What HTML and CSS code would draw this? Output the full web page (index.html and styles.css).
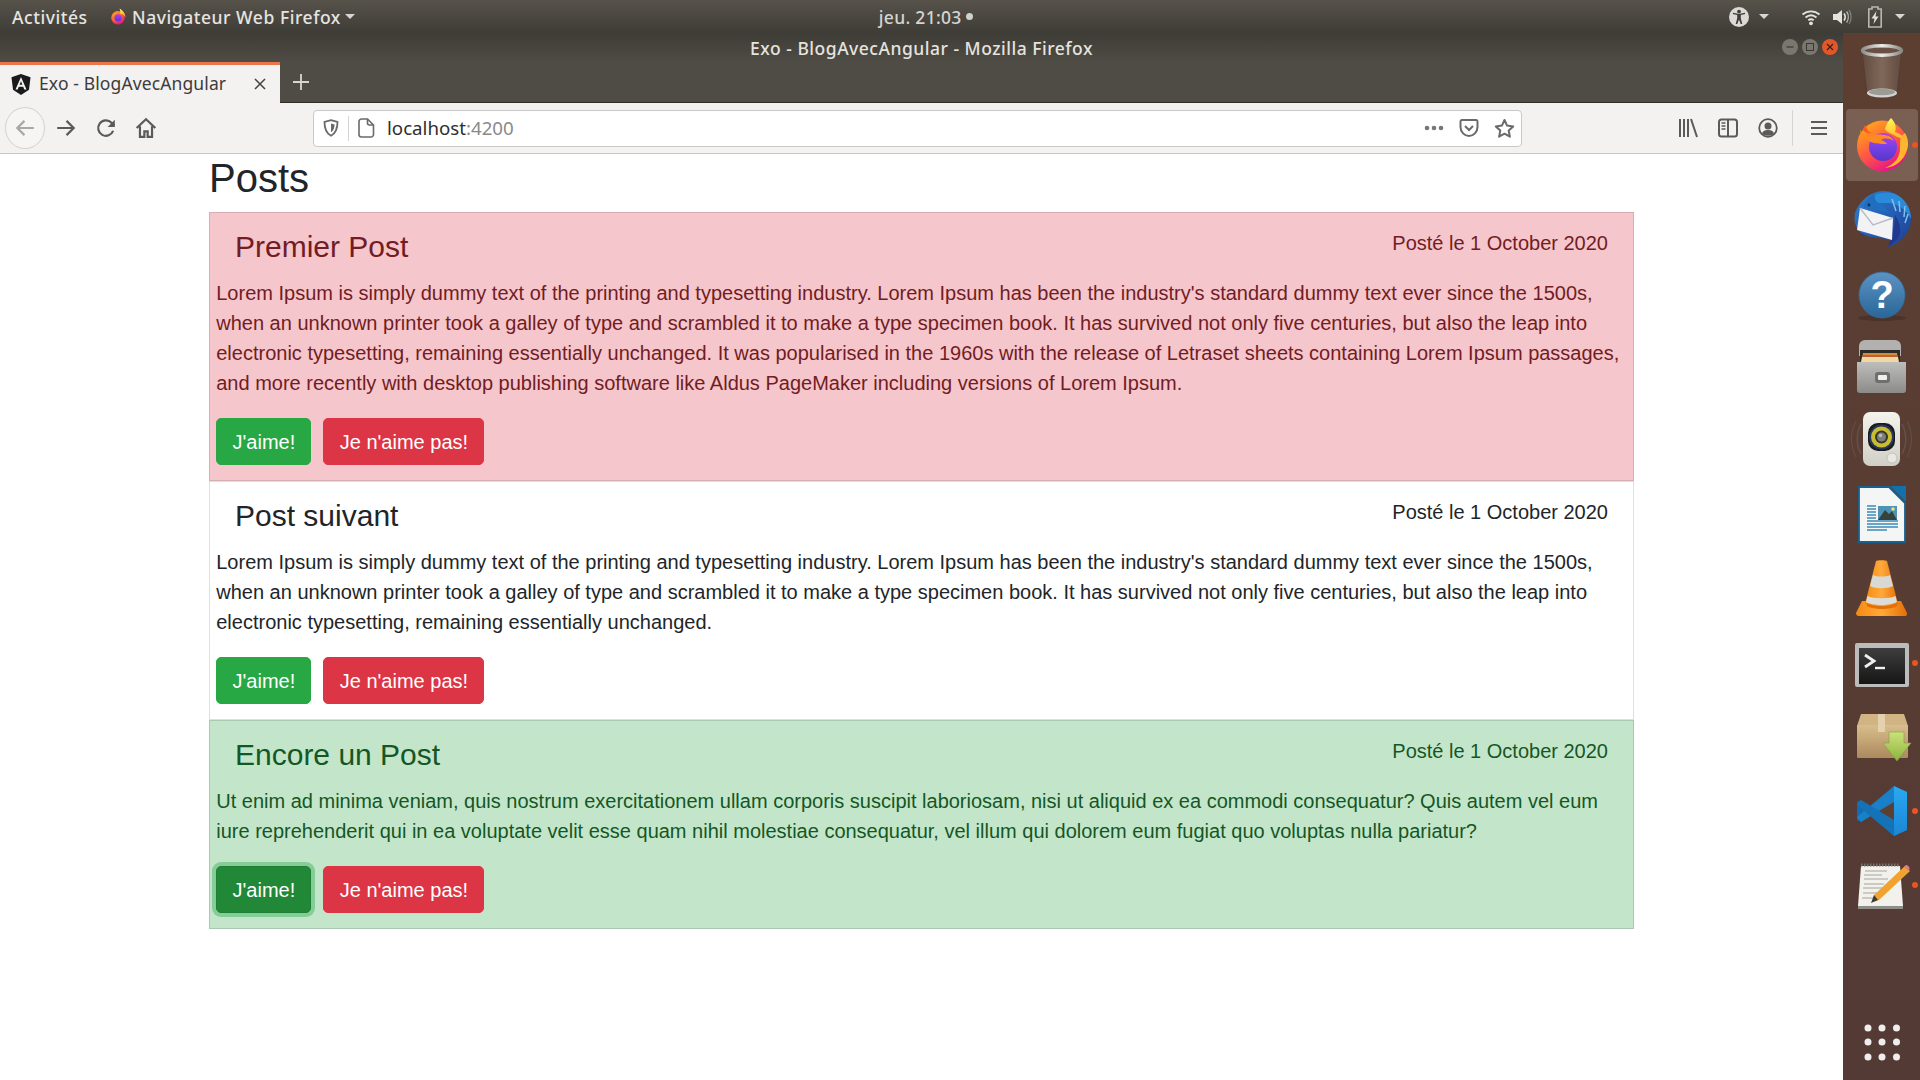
FILE: index.html
```html
<!DOCTYPE html>
<html lang="fr">
<head>
<meta charset="utf-8">
<title>Exo - BlogAvecAngular</title>
<link rel="stylesheet" href="styles.css">
</head>
<body>
<svg class="defs" width="0" height="0" aria-hidden="true">
  <defs>
    <linearGradient id="ffBase" x1="0.1" y1="0.2" x2="0.6" y2="1"><stop offset="0" stop-color="#ff9a1f"/><stop offset="0.55" stop-color="#ff4f4a"/><stop offset="1" stop-color="#e31587"/></linearGradient>
    <linearGradient id="ffTop" x1="0.4" y1="0" x2="0.6" y2="1"><stop offset="0" stop-color="#fff44f"/><stop offset="0.6" stop-color="#ffbd2e"/><stop offset="1" stop-color="#ff8a2a"/></linearGradient>
    <linearGradient id="ffGlobe" x1="0.5" y1="0" x2="0.5" y2="1"><stop offset="0" stop-color="#c139e6"/><stop offset="0.5" stop-color="#7542e5"/><stop offset="1" stop-color="#5a35c9"/></linearGradient>
    <linearGradient id="trashBody" x1="0" y1="0" x2="1" y2="0"><stop offset="0" stop-color="#624a3e"/><stop offset="0.5" stop-color="#806859"/><stop offset="1" stop-color="#604a3e"/></linearGradient>
    <linearGradient id="metal" x1="0" y1="0" x2="1" y2="0"><stop offset="0" stop-color="#8f8f8c"/><stop offset="0.5" stop-color="#ececea"/><stop offset="1" stop-color="#8a8a86"/></linearGradient>
    <linearGradient id="tbBlue" x1="0" y1="0" x2="1" y2="1"><stop offset="0" stop-color="#2f7fd1"/><stop offset="1" stop-color="#1b3f94"/></linearGradient>
    <linearGradient id="helpBlue" x1="0" y1="0" x2="0" y2="1"><stop offset="0" stop-color="#5c93c4"/><stop offset="1" stop-color="#2a6698"/></linearGradient>
    <linearGradient id="cabinet" x1="0" y1="0" x2="0" y2="1"><stop offset="0" stop-color="#bdbdbb"/><stop offset="1" stop-color="#8b8b8a"/></linearGradient>
    <linearGradient id="speakerBox" x1="0" y1="0" x2="0" y2="1"><stop offset="0" stop-color="#f4f3ec"/><stop offset="1" stop-color="#cfcfc8"/></linearGradient>
    <linearGradient id="cone" x1="0" y1="0" x2="1" y2="0"><stop offset="0" stop-color="#f58a0f"/><stop offset="0.5" stop-color="#ffa93a"/><stop offset="1" stop-color="#e56f05"/></linearGradient>
    <linearGradient id="termBg" x1="0" y1="0" x2="0" y2="1"><stop offset="0" stop-color="#3e3e3e"/><stop offset="1" stop-color="#161616"/></linearGradient>
    <linearGradient id="box" x1="0" y1="0" x2="0" y2="1"><stop offset="0" stop-color="#d9bd8c"/><stop offset="1" stop-color="#ab8a5e"/></linearGradient>
    <linearGradient id="arrowGreen" x1="0" y1="0" x2="0" y2="1"><stop offset="0" stop-color="#cbe27a"/><stop offset="1" stop-color="#8db33d"/></linearGradient>
    <linearGradient id="vsLight" x1="0" y1="0" x2="0" y2="1"><stop offset="0" stop-color="#2aa9f0"/><stop offset="1" stop-color="#1a86d6"/></linearGradient>
  </defs>
</svg>

<header class="topbar">
  <div class="top-left">
    <span class="top-activities">Activités</span>
    <svg class="top-ff" width="18" height="18" viewBox="0 0 72 72"><circle cx="36" cy="39" r="27" fill="url(#ffBase)"/><path d="M42 2c14 8 24 20 24 36-5-9-12-14-22-16 2-7 1-13-2-20z" fill="url(#ffTop)"/><circle cx="36" cy="39" r="14" fill="url(#ffGlobe)"/></svg>
    <span class="top-app">Navigateur Web Firefox</span>
    <span class="caret"></span>
  </div>
  <div class="top-clock"><span>jeu. 21:03</span><i class="clock-dot"></i></div>
  <div class="top-right">
    <svg class="ind-a11y" width="20" height="20" viewBox="0 0 20 20"><circle cx="10" cy="10" r="10" fill="#dcdad6"/><circle cx="10" cy="4.600" r="1.900" fill="#3f3d38"/><path d="M3.800 7l4.400 1v3.200L6.700 17h1.600l1.700-4.600 1.700 4.600h1.600l-1.500-5.800V8l4.400-1-.3-1.200-5.900 1.100-5.900-1.100z" fill="#3f3d38"/></svg>
    <span class="caret caret-a11y"></span>
    <svg class="ind-wifi" width="20" height="20" viewBox="0 0 20 20"><g fill="none" stroke="#e4e2de" stroke-width="1.800"><path d="M1.500 7.500c5-4.200 12-4.200 17 0"/><path d="M4.500 10.500c3.400-2.800 7.600-2.800 11 0"/><path d="M7.300 13.200c1.700-1.200 3.700-1.200 5.400 0"/></g><circle cx="10" cy="16.300" r="1.900" fill="#e4e2de"/></svg>
    <svg class="ind-vol" width="20" height="20" viewBox="0 0 20 20"><path d="M1 7h4l5-4v14l-5-4H1z" fill="#e4e2de"/><g fill="none" stroke="#e4e2de"><path d="M12 6.500c1.400 2 1.400 5 0 7" stroke-width="1.600"/><path d="M14.600 4.500c2.200 3.200 2.200 7.800 0 11" stroke-width="1.400" opacity=".7"/><path d="M17 3c2.800 4 2.800 10 0 14" stroke-width="1.200" opacity=".4"/></g></svg>
    <svg class="ind-bat" width="16" height="22" viewBox="0 0 16 22"><path d="M5 1h6v2h3.200v18H1.800V3H5z" fill="none" stroke="#b9b7b2" stroke-width="1.600"/><path d="M9.500 5 4.500 12.500h3L6.500 18l5-7.500h-3z" fill="#e4e2de"/></svg>
    <span class="caret caret-end"></span>
  </div>
</header>

<div class="desk">
  <div class="window">
    <div class="titlebar">
      <span class="win-title">Exo - BlogAvecAngular - Mozilla Firefox</span>
      <div class="win-controls">
        <span class="win-btn"><svg width="16" height="16" viewBox="0 0 16 16"><path d="M4.500 8h7" stroke="#3a3833" stroke-width="1.200"/></svg></span>
        <span class="win-btn"><svg width="16" height="16" viewBox="0 0 16 16"><rect x="4.500" y="4.500" width="7" height="7" fill="none" stroke="#3a3833"/></svg></span>
        <span class="win-btn win-close"><svg width="16" height="16" viewBox="0 0 16 16"><path d="M5 5l6 6M11 5l-6 6" stroke="#3a2018" stroke-width="1.200"/></svg></span>
      </div>
    </div>
    <div class="tabstrip">
      <div class="tab">
        <svg class="tab-fav" width="20" height="21" viewBox="0 0 20 21"><path d="M10 0 19.500 3.300 18 15.800 10 21 2 15.800.5 3.300z" fill="#1a1a1d"/><path d="M10 3 4.500 15.500h2.200l1.100-2.800h4.400l1.100 2.800h2.200zM8.600 10.800 10 7.300l1.400 3.500z" fill="#f3f3f3"/></svg>
        <span class="tab-title">Exo - BlogAvecAngular</span>
        <svg class="tab-close" width="14" height="14" viewBox="0 0 14 14"><path d="M2 2l10 10M12 2 2 12" stroke="#45433f" stroke-width="1.500"/></svg>
      </div>
      <svg class="tab-new" width="18" height="18" viewBox="0 0 18 18"><path d="M9 1v16M1 9h16" stroke="#d8d6d2" stroke-width="1.800"/></svg>
    </div>
    <nav class="toolbar">
      <span class="tb-btn tb-back"><svg width="22" height="22" viewBox="0 0 20 20"><path d="M18 10H3M9.500 3.500 3 10l6.500 6.500" fill="none" stroke="#a8a8a8" stroke-width="2"/></svg></span>
      <span class="tb-btn"><svg width="22" height="22" viewBox="0 0 20 20"><path d="M2 10h15M10.500 3.500 17 10l-6.500 6.500" fill="none" stroke="#5a5a5a" stroke-width="2"/></svg></span>
      <span class="tb-btn"><svg width="22" height="22" viewBox="0 0 20 20"><path d="M16.500 12.500A7 7 0 1 1 15 5.300L17.500 8" fill="none" stroke="#5a5a5a" stroke-width="2"/><path d="M18 2.500V9h-6.500z" fill="#5a5a5a"/></svg></span>
      <span class="tb-btn"><svg width="22" height="22" viewBox="0 0 20 20"><path d="M1.500 10 10 2l8.500 8M4.500 8.500V18h4v-5h3v5h4V8.500" fill="none" stroke="#5a5a5a" stroke-width="2"/></svg></span>
      <div class="urlbar">
        <span class="url-shield"><svg width="16" height="18" viewBox="0 0 16 18"><path d="M8 1.200 14.500 3c0 6-.8 10.800-6.500 13.800C2.300 13.800 1.500 9 1.500 3z" fill="none" stroke="#6a6a6a" stroke-width="1.800"/><path d="M8 4.500 11.500 5.500c0 3-.5 5.800-3.500 7.800z" fill="#6a6a6a"/></svg></span>
        <span class="url-page"><svg width="17" height="20" viewBox="0 0 17 20"><path d="M3.500 1h6l6 6v9.500A2.500 2.500 0 0 1 13 19H3.500A2.500 2.500 0 0 1 1 16.500v-13A2.500 2.500 0 0 1 3.500 1z" fill="none" stroke="#6a6a6a" stroke-width="1.600"/><path d="M9.500 1v4a2 2 0 0 0 2 2h4" fill="none" stroke="#6a6a6a" stroke-width="1.600"/></svg></span>
        <span class="url-text">localhost<em>:4200</em></span>
        <span class="url-actions">
          <svg width="20" height="6" viewBox="0 0 20 6"><circle cx="3" cy="3" r="2.300" fill="#777"/><circle cx="10" cy="3" r="2.300" fill="#777"/><circle cx="17" cy="3" r="2.300" fill="#777"/></svg>
          <svg width="20" height="20" viewBox="0 0 20 20"><path d="M2.800 2h14.400a1.500 1.500 0 0 1 1.300 1.500V9c0 5-4 9-8.500 9S1.500 14 1.500 9V3.500A1.500 1.500 0 0 1 2.800 2z" fill="none" stroke="#6a6a6a" stroke-width="2"/><path d="M6 8l4 4 4-4" fill="none" stroke="#6a6a6a" stroke-width="2"/></svg>
          <svg width="21" height="21" viewBox="0 0 21 21"><path d="M10.500 2l2.600 5.600 6.100.8-4.500 4.200 1.200 6.100-5.400-3-5.400 3 1.200-6.100L1.800 8.400l6.100-.8z" fill="none" stroke="#6a6a6a" stroke-width="2" stroke-linejoin="round"/></svg>
        </span>
      </div>
      <span class="tb-btn tb-lib"><svg width="20" height="20" viewBox="0 0 20 20"><path d="M2 1v18M6 1v18M10 1v18M13 1l6 18" fill="none" stroke="#5a5a5a" stroke-width="2"/></svg></span>
      <span class="tb-btn"><svg width="20" height="20" viewBox="0 0 20 20"><rect x="1" y="1.500" width="18" height="17" rx="2.500" fill="none" stroke="#5a5a5a" stroke-width="2"/><path d="M10 2v16" stroke="#5a5a5a" stroke-width="2"/><path d="M3.500 5h4M3.500 8h4M3.500 11h4" stroke="#5a5a5a" stroke-width="1.500"/></svg></span>
      <span class="tb-btn"><svg width="20" height="20" viewBox="0 0 20 20"><circle cx="10" cy="10" r="8.800" fill="none" stroke="#5a5a5a" stroke-width="1.800"/><circle cx="10" cy="8" r="3.500" fill="#5a5a5a"/><path d="M4 15.500c1-3 3.500-3.500 6-3.500s5 .5 6 3.500c-3.500 3-8.500 3-12 0z" fill="#5a5a5a"/></svg></span>
      <span class="tb-sep"></span>
      <span class="tb-btn tb-menu"><svg width="18" height="18" viewBox="0 0 18 18"><path d="M1 3h16M1 9h16M1 15h16" stroke="#5a5a5a" stroke-width="2"/></svg></span>
    </nav>

    <main class="page">
      <div class="container">
        <h1 class="page-title">Posts</h1>
        <ul class="posts">
          <li class="post post-danger">
            <div class="post-head"><h4 class="post-title">Premier Post</h4><span class="post-date">Posté le 1 October 2020</span></div>
            <p class="post-body">Lorem Ipsum is simply dummy text of the printing and typesetting industry. Lorem Ipsum has been the industry's standard dummy text ever since the 1500s, when an unknown printer took a galley of type and scrambled it to make a type specimen book. It has survived not only five centuries, but also the leap into electronic typesetting, remaining essentially unchanged. It was popularised in the 1960s with the release of Letraset sheets containing Lorem Ipsum passages, and more recently with desktop publishing software like Aldus PageMaker including versions of Lorem Ipsum.</p>
            <div class="post-actions"><button class="btn btn-like">J'aime!</button><button class="btn btn-dislike">Je n'aime pas!</button></div>
          </li>
          <li class="post">
            <div class="post-head"><h4 class="post-title">Post suivant</h4><span class="post-date">Posté le 1 October 2020</span></div>
            <p class="post-body">Lorem Ipsum is simply dummy text of the printing and typesetting industry. Lorem Ipsum has been the industry's standard dummy text ever since the 1500s, when an unknown printer took a galley of type and scrambled it to make a type specimen book. It has survived not only five centuries, but also the leap into electronic typesetting, remaining essentially unchanged.</p>
            <div class="post-actions"><button class="btn btn-like">J'aime!</button><button class="btn btn-dislike">Je n'aime pas!</button></div>
          </li>
          <li class="post post-success">
            <div class="post-head"><h4 class="post-title">Encore un Post</h4><span class="post-date">Posté le 1 October 2020</span></div>
            <p class="post-body">Ut enim ad minima veniam, quis nostrum exercitationem ullam corporis suscipit laboriosam, nisi ut aliquid ex ea commodi consequatur? Quis autem vel eum iure reprehenderit qui in ea voluptate velit esse quam nihil molestiae consequatur, vel illum qui dolorem eum fugiat quo voluptas nulla pariatur?</p>
            <div class="post-actions"><button class="btn btn-like btn-focus">J'aime!</button><button class="btn btn-dislike">Je n'aime pas!</button></div>
          </li>
        </ul>
      </div>
    </main>
  </div>

  <aside class="dock">
    <div class="dock-item">
      <svg width="72" height="72" viewBox="0 0 72 72"><path d="M16 15 21 58c3 5 27 5 30 0l5-43z" fill="url(#trashBody)" stroke="#4d382e" stroke-width=".6"/><ellipse cx="36" cy="58" rx="15" ry="4.500" fill="#d2d2cf"/><ellipse cx="36" cy="57" rx="13" ry="3.200" fill="#9a9a97"/><ellipse cx="36" cy="15.500" rx="19.500" ry="4.800" fill="#6a5044" stroke="url(#metal)" stroke-width="3.400"/></svg>
    </div>
    <div class="dock-item dock-active">
      <svg width="72" height="72" viewBox="0 0 72 72"><circle cx="36.500" cy="37" r="25.500" fill="url(#ffBase)"/><path d="M45 9c4 4 6 9 4 14 7 2 13 8 13 16-2-6-6-10-11-11-5-4-10-4-12-8 1-4 3-8 6-11z" fill="url(#ffTop)"/><path d="M59 24c3 5 4 11 2 17-3 10-11 17-22 18 10-4 15-11 15-20 0-6-1-11 5-15z" fill="#ffb52e"/><circle cx="37" cy="38" r="14" fill="url(#ffGlobe)"/><path d="M14 20c1 4 4 7 8 7 4-1 10-2 15-1 5 0 9 2 11 6-5-3-10-3-13-1 3 1 5 2 6 4-6 0-13 0-18-3-4-3-9-5-9-12z" fill="#ff8a1f"/><path d="M20 16c0 4 2 7 6 8-4 1-8-1-9-3 0-2 1-4 3-5z" fill="#ff5a1f"/></svg>
      <i class="dock-dot"></i>
    </div>
    <div class="dock-item">
      <svg width="72" height="72" viewBox="0 0 72 72"><path d="M9 30C7 40 11 49 20 53L46 57 42 64C56 60 65 48 65 36 65 20 52 8 38 8 26 8 14 16 9 30z" fill="url(#tbBlue)"/><path d="M20 20c5-9 18-13 29-9 11 5 16 15 16 25-5-9-12-15-22-16z" fill="#2c8adb"/><path d="M46 16l4 12M53 18l1 11M59 23l-1 11M62 31l-3 9" stroke="#7fc0ec" stroke-width="1.500" fill="none"/><path d="M49 32c5 8 7 17 3 23-3 4-7 6-10 9 3-8 7-20 7-32z" fill="#22378f"/><path d="M11 47c2 3 6 5 11 6l-6-1z" fill="#1d2f86"/><path d="M14 25 47 35 46 57 11 47z" fill="#f3f3f5"/><path d="M14 25 27 42 47 35" fill="none" stroke="#b9bcc6" stroke-width="1.400"/><path d="M18 25c0-6 5-12 11-14-1 3 0 6 2 8 4 2 8 5 12 11-9-3-17-5-25-5z" fill="#1f6fbe"/><circle cx="23" cy="22" r="1.400" fill="#10305c"/></svg>
    </div>
    <div class="dock-item">
      <svg width="72" height="72" viewBox="0 0 72 72"><ellipse cx="36" cy="61" rx="24" ry="3" fill="#4a332a"/><circle cx="36" cy="38" r="23" fill="url(#helpBlue)"/><circle cx="36" cy="38" r="23" fill="none" stroke="#346c9b" stroke-width=".8"/><text class="dock-q" x="36" y="51" text-anchor="middle">?</text></svg>
    </div>
    <div class="dock-item">
      <svg width="72" height="72" viewBox="0 0 72 72"><path d="M13 15a6 6 0 0 1 6-6h30a6 6 0 0 1 6 6v10H13z" fill="#b2b1af"/><rect x="14" y="19" width="40" height="12" fill="#2c2a27"/><path d="M15 32l2-10h34l2 10z" fill="#d18b3b"/><path d="M15 32l1-6h36l1 6z" fill="#f1d7a8"/><path d="M17 25h34" stroke="#b5562c" stroke-width="1.500"/><path d="M11 31h49v28c0 2-1 3-3 3H14c-2 0-3-1-3-3z" fill="url(#cabinet)"/><rect x="29" y="41" width="15" height="11" rx="3" fill="#6f6f6e"/><rect x="32" y="44" width="9" height="5" rx="1" fill="#efefed"/></svg>
    </div>
    <div class="dock-item">
      <svg width="72" height="72" viewBox="0 0 72 72"><g fill="none" stroke="#7a7f86" opacity=".3"><path d="M15 19c-5 9-5 21 0 30" stroke-width="1.500"/><path d="M10 16c-6 11-6 25 0 36" stroke-width="1"/><path d="M56 19c5 9 5 21 0 30" stroke-width="1.500"/><path d="M61 16c6 11 6 25 0 36" stroke-width="1"/></g><rect x="17" y="7" width="37" height="54" rx="7" fill="url(#speakerBox)"/><rect x="22" y="18" width="27" height="28" rx="10" fill="#1b1b1b"/><circle cx="35.500" cy="32" r="12.500" fill="#27365f"/><circle cx="35.500" cy="32" r="10.500" fill="#c8bd32"/><circle cx="35.500" cy="32" r="6.500" fill="#38352a"/><circle cx="35.500" cy="32" r="4.500" fill="#7d7d7a"/><circle cx="34.500" cy="30.500" r="1.800" fill="#bbb"/><circle cx="46" cy="53" r="5" fill="#e8e8e2" stroke="#c3c3bb"/></svg>
    </div>
    <div class="dock-item">
      <svg width="72" height="72" viewBox="0 0 72 72"><path d="M13 8h30l16 16v39H13z" fill="#f4f5f5" stroke="#17618f" stroke-width="1.800"/><path d="M44 7h16v16z" fill="#1470aa"/><rect x="32" y="27" width="19" height="14" fill="#4d93b8"/><path d="M32 41l7-10 4 4 3-3 5 9z" fill="#36433c"/><circle cx="47" cy="30" r="1.800" fill="#f1e07a"/><path d="M21 27h9M21 30h9M21 33h9M21 36h9M21 39h9M21 42h31M21 45h31M21 48h31M21 51h20" stroke="#3b8ab8" stroke-width="1.500"/></svg>
    </div>
    <div class="dock-item">
      <svg width="72" height="72" viewBox="0 0 72 72"><path d="M16 48 10 60c0 2 1 3 3 3h46c2 0 2-1 2-3l-6-12z" fill="url(#cone)"/><path d="M30 8c1-1 10-1 11 0l11 43c-3 6-30 6-33 0z" fill="url(#cone)"/><path d="M27 22c4 2 13 2 17 0l3 11c-5 3-18 3-23 0z" fill="#d8d8d4"/><path d="M21.500 43c6 3 22 3 28 0l1.500 6c-6 4-25 4-31 0z" fill="#dcdcd8"/><path d="M21 50c5 4 25 4 30 0v3c-6 4-24 4-30 0z" fill="#e66f05"/></svg>
    </div>
    <div class="dock-item">
      <svg width="72" height="72" viewBox="0 0 72 72"><rect x="9" y="16" width="54" height="44" rx="2" fill="#bcbcba"/><rect x="13" y="21" width="46" height="36" fill="url(#termBg)"/><path d="M19 28l9 6-9 6" fill="none" stroke="#f0f0f0" stroke-width="2.800"/><path d="M29 41h10" stroke="#f0f0f0" stroke-width="2.400"/></svg>
      <i class="dock-dot"></i>
    </div>
    <div class="dock-item">
      <svg width="72" height="72" viewBox="0 0 72 72"><path d="M15 13h43l4 12H11z" fill="#d1b483"/><rect x="11" y="24" width="51" height="33" rx="1" fill="url(#box)"/><rect x="32" y="13" width="7" height="18" fill="#e4d1ae"/><path d="M43 31h15v11h7L51 60 37 42h6z" fill="url(#arrowGreen)" stroke="#829f40" stroke-width=".6"/></svg>
    </div>
    <div class="dock-item">
      <svg width="72" height="72" viewBox="0 0 72 72"><path d="M48 11 25 33 15 25l-4 2v18l4 2 10-8 23 22 13-6V17z" fill="#0e6fb8"/><path d="M48 24v24L30 36z" fill="#5c3f33"/><path d="M11 42l37-31v16L15 47z" fill="#1a83cc" opacity=".9"/><path d="M11 30l37 31V45L15 25z" fill="#1572b6"/><path d="M48 11l13 6v38l-13 6z" fill="url(#vsLight)"/></svg>
      <i class="dock-dot"></i>
    </div>
    <div class="dock-item">
      <svg width="72" height="72" viewBox="0 0 72 72"><path d="M15 17h39l3 40H12z" fill="#f2f1ec"/><path d="M12 57h45v3H12z" fill="#8e8d88"/><path d="M15 16h39" stroke="#77766f" stroke-width="3" stroke-dasharray="1.500 1.500"/><path d="M19 22h22M18 26h18M18 30h24M18 35h20M17 39h20M17 44h14M16 49h16" stroke="#a5a49e" stroke-width="1.200"/><path d="M28 46 59 17l5 5-31 29-6 2z" fill="#f2a32f"/><path d="M58 18l2-2c1-.5 4 2 3.500 4l-1.500 1.500z" fill="#d97e87"/><path d="M28 46l-3 8 7-3z" fill="#3b3b3b"/></svg>
      <i class="dock-dot"></i>
    </div>
    <div class="dock-item dock-apps">
      <svg width="72" height="72" viewBox="0 0 72 72"><g fill="#efeeec"><circle cx="22" cy="22" r="3.500"/><circle cx="36" cy="22" r="3.500"/><circle cx="50.500" cy="22" r="3.500"/><circle cx="22" cy="36" r="3.500"/><circle cx="36" cy="36" r="3.500"/><circle cx="50.500" cy="36" r="3.500"/><circle cx="22" cy="51" r="3.500"/><circle cx="36" cy="51" r="3.500"/><circle cx="50.500" cy="51" r="3.500"/></g></svg>
    </div>
  </aside>
</div>
</body>
</html>
```
FILE: styles.css
```css
* { box-sizing: border-box; }
html, body { margin: 0; padding: 0; height: 100%; }
body {
  width: 1920px;
  height: 1080px;
  overflow: hidden;
  display: flex;
  flex-direction: column;
  font-family: "Liberation Sans", Arial, sans-serif;
  background: #fff;
}
.defs { position: absolute; }

/* GNOME top bar */
.topbar {
  height: 33px;
  flex: none;
  display: grid;
  grid-template-columns: 1fr auto 1fr;
  align-items: center;
  padding-left: 12px;
  background: linear-gradient(#57534b, #3e3c36);
  color: #e6e4e0;
  font-family: "Noto Sans", sans-serif;
  font-size: 17.5px;
  font-weight: 500;
  letter-spacing: .55px;
}
.top-left { display: flex; align-items: center; }
.top-activities { width: 97px; white-space: nowrap; }
.top-ff { margin-right: 5px; }
.top-app { width: 213px; white-space: nowrap; }
.caret {
  width: 0;
  height: 0;
  border-left: 5px solid transparent;
  border-right: 5px solid transparent;
  border-top: 5px solid #d8d6d2;
}
.top-clock { display: flex; align-items: center; margin-left: -80.5px; color: #d6d4d0; white-space: nowrap; letter-spacing: .3px; }
.clock-dot { width: 7px; height: 7px; margin-left: 4px; border-radius: 50%; background: #d2d0cc; }
.top-right { display: flex; align-items: center; justify-content: flex-end; padding-right: 15px; }
.ind-a11y { margin-right: 10px; }
.caret-a11y { margin-right: 32px; }
.ind-wifi { margin-right: 11px; }
.ind-vol { margin-right: 15px; }
.ind-bat { margin-right: 12px; }

/* Desktop split */
.desk { flex: 1; display: flex; min-height: 0; }
.window { flex: 1; min-width: 0; display: flex; flex-direction: column; }

.titlebar {
  height: 29px;
  flex: none;
  position: relative;
  display: flex;
  align-items: center;
  justify-content: center;
  background: linear-gradient(#3e3c36, #4f4c45);
  color: #e5e3df;
  font-family: "Noto Sans", sans-serif;
  font-size: 17.5px;
  font-weight: 500;
  letter-spacing: .5px;
}
.win-controls { position: absolute; right: 5px; top: 6px; display: flex; gap: 4px; }
.win-btn { width: 16px; height: 16px; border-radius: 50%; background: #7a776f; display: block; }
.win-btn svg { display: block; }
.win-close { background: #e2572a; }

.tabstrip {
  height: 41px;
  flex: none;
  display: flex;
  align-items: stretch;
  background: #4f4c45;
  border-bottom: 1px solid #2f2e2a;
}
.tab {
  width: 280px;
  display: flex;
  align-items: center;
  padding-left: 11px;
  background: #f3f2f0;
  border-top: 3px solid #e9764a;
  margin-bottom: -1px;
  color: #3c3c3c;
  font-family: "Noto Sans", sans-serif;
  font-size: 17.5px;
  letter-spacing: .12px;
}
.tab-title { margin-left: 8px; padding-bottom: 2px; width: 214px; white-space: nowrap; }
.tab-close { flex: none; }
.tab-new { align-self: center; margin-left: 12px; }

.toolbar {
  height: 51px;
  flex: none;
  display: flex;
  align-items: center;
  padding-left: 5px;
  background: #f3f2f0;
  border-bottom: 1px solid #c9c7c5;
}
.tb-btn {
  width: 40px;
  height: 40px;
  flex: none;
  display: flex;
  align-items: center;
  justify-content: center;
}
.tb-back { height: 42px; margin-right: 1px; border: 1px solid #d3d2d0; border-radius: 50%; background: #f6f5f3; }
.urlbar {
  width: 1209px;
  height: 37px;
  flex: none;
  margin-left: 147px;
  display: flex;
  align-items: center;
  background: #fff;
  border: 1px solid #cbc9c7;
  border-radius: 4px;
  font-family: "Noto Sans", sans-serif;
  font-size: 18.7px;
  color: #2e2e2e;
}
.url-shield {
  width: 35px;
  height: 25px;
  display: flex;
  align-items: center;
  justify-content: center;
  border-right: 1px solid #d6d5d3;
}
.url-page { width: 34px; display: flex; justify-content: center; }
.url-text { margin-left: 4px; padding-bottom: 2px; flex: 1; }
.url-text em { font-style: normal; color: #8a8a8a; }
.url-actions { display: flex; align-items: center; gap: 15px; padding-right: 6px; }
.tb-lib { margin-left: 146px; }
.tb-sep { width: 1px; height: 36px; margin-left: 4px; background: #d6d5d3; }
.tb-menu { margin-left: 6px; }

/* Page content */
.page { flex: 1; background: #fff; overflow: hidden; }
.container { width: 1425px; margin: 0 auto; color: #212529; }
.page-title { margin: 0 0 10px; font-size: 40px; line-height: 48px; font-weight: 400; }
.posts { list-style: none; margin: 0; padding: 0; }
.post {
  padding: 15px 6.75px 15px 6.25px;
  background: #fff;
  border: 1px solid #dfdfdf;
  color: #212529;
}
.post-danger { background: #f5c6cb; color: #721c24; border-color: #d6adb2; }
.post-success { background: #c3e6cb; color: #155724; border-color: #abc9b2; }
.post-head {
  height: 50px;
  display: flex;
  justify-content: space-between;
  align-items: flex-start;
  padding: 0 18.25px 0 18.75px;
}
.post-title { margin: 1px 0 0; font-size: 30px; line-height: 36px; font-weight: 400; }
.post-date { font-size: 20px; line-height: 30px; }
.post-body { margin: 0 0 20px; font-size: 20px; line-height: 30px; }
.post-actions { display: flex; gap: 12px; }
.btn {
  height: 47px;
  padding: 0 15.25px;
  border: 1px solid transparent;
  border-radius: 5px;
  font-family: inherit;
  font-size: 20px;
  line-height: 30px;
  color: #fff;
}
.btn-like { background: #28a745; border-color: #28a745; }
.btn-dislike { background: #dc3545; border-color: #dc3545; }
.btn-focus { background: #218838; border-color: #1e7e34; box-shadow: 0 0 0 4px rgba(72, 180, 97, .5); }

/* Ubuntu dock */
.dock {
  width: 77px;
  flex: none;
  display: flex;
  flex-direction: column;
  gap: 2px;
  padding: 2px 2px 2px 3px;
  background: linear-gradient(#5d3f31, #533a35);
}
.dock-item { position: relative; width: 72px; height: 72px; flex: none; border-radius: 4px; }
.dock-item svg { display: block; }
.dock-active { background: #7a5f53; }
.dock-dot { position: absolute; left: 66px; top: 33px; width: 6px; height: 6px; border-radius: 50%; background: #e95420; }
.dock-apps { margin-top: auto; }
.dock-q { font-family: "Liberation Sans", sans-serif; font-size: 38px; font-weight: 700; fill: #fff; }
```
